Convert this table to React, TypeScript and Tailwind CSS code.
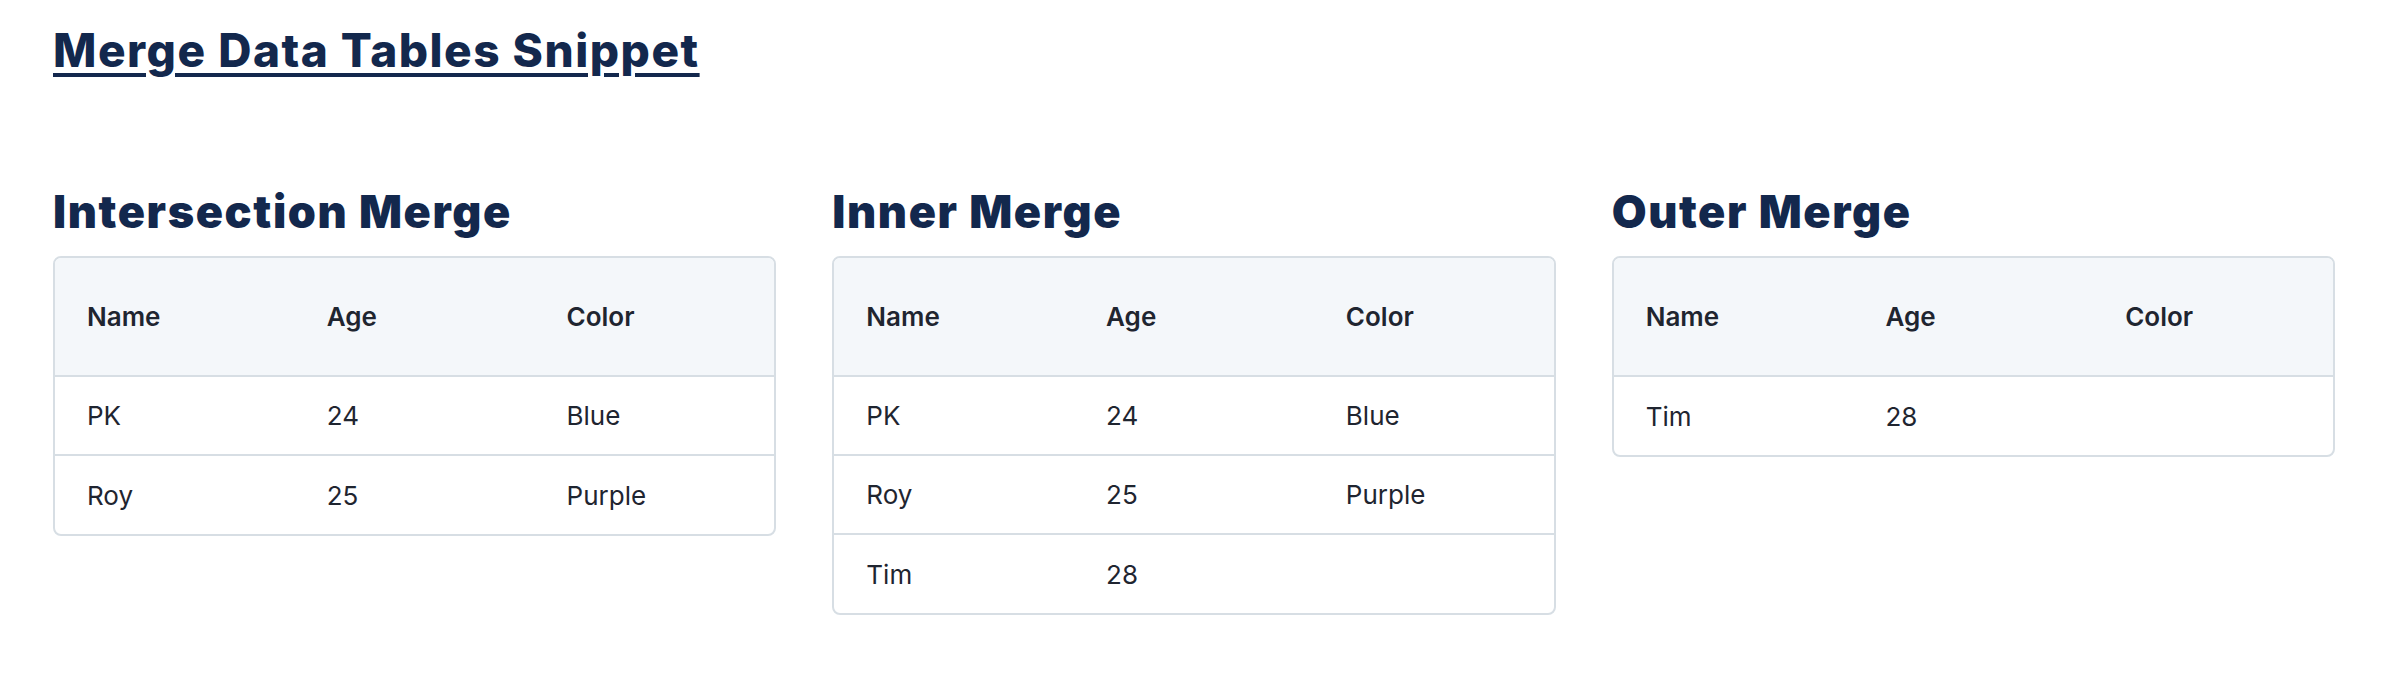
const COLS = ["Name", "Age", "Color"];

type Row = [string, string, string];

const TABLES: { title: string; rows: Row[] }[] = [
  {
    title: "Intersection Merge",
    rows: [
      ["PK", "24", "Blue"],
      ["Roy", "25", "Purple"],
    ],
  },
  {
    title: "Inner Merge",
    rows: [
      ["PK", "24", "Blue"],
      ["Roy", "25", "Purple"],
      ["Tim", "28", ""],
    ],
  },
  {
    title: "Outer Merge",
    rows: [["Tim", "28", ""]],
  },
];

function MergeTable({ title, rows }: { title: string; rows: Row[] }) {
  return (
    <section className="min-w-0">
      <h2 className="font-['Inter',sans-serif] text-[45px] font-black leading-[52px] tracking-[1.6px] text-[#13284d]">
        {title}
      </h2>
      <div className="mt-[18px] overflow-hidden rounded-[8px] border-2 border-[#d7dee4]">
        <table className="w-full table-fixed border-collapse font-['Inter',sans-serif] text-[26px] text-[#1f2530]">
          <thead>
            <tr className="h-[118px] bg-[#f4f7fa]">
              {COLS.map((c) => (
                <th key={c} className="pl-[32px] text-left font-semibold">
                  {c}
                </th>
              ))}
            </tr>
          </thead>
          <tbody>
            {rows.map((r, i) => (
              <tr key={i} className="h-[79px] border-t-2 border-[#d7dee4]">
                {r.map((v, j) => (
                  <td key={j} className="pl-[32px] text-left">
                    {v}
                  </td>
                ))}
              </tr>
            ))}
          </tbody>
        </table>
      </div>
    </section>
  );
}

export default function App() {
  return (
    <div className="min-h-screen bg-white pl-[53px] pr-[49px] pt-[22px]">
      <h1 className="font-['Inter',sans-serif] text-[46px] font-extrabold leading-[56px] tracking-[1.5px] text-[#13284d] underline decoration-[4px] underline-offset-[6px]">
        Merge Data Tables Snippet
      </h1>
      <div className="mt-[108px] grid grid-cols-3 items-start gap-[56px]">
        {TABLES.map((t) => (
          <MergeTable key={t.title} title={t.title} rows={t.rows} />
        ))}
      </div>
    </div>
  );
}
